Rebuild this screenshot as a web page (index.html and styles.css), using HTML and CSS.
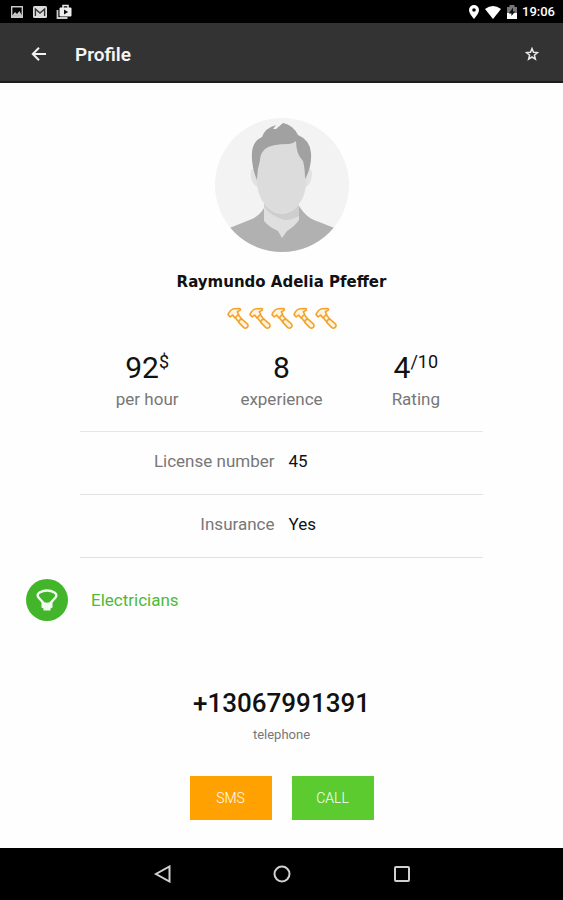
FILE: index.html
```html
<!DOCTYPE html>
<html lang="en">
<head>
<meta charset="utf-8">
<meta name="viewport" content="width=device-width, initial-scale=1">
<title>Profile</title>
<link rel="stylesheet" href="styles.css">
</head>
<body>
<svg class="sprite" aria-hidden="true">
  <symbol id="hammer" viewBox="0 0 22 22">
    <g fill="#fff3df" stroke="#f2a32c" stroke-width="1.6" stroke-linejoin="round">
      <path d="M7.600 10 10.800 7 15 12.600 12 15.200Z"/>
      <path d="M12 15.600Q11.600 12.400 15 12.200L20.600 17.200Q21.600 19 20.200 20.400 18.600 21.800 16.800 20.600Z"/>
      <path d="M1 7.600Q3.200 2.400 7 1.800L12.600 1.600Q14 2.200 13 3.400L10.400 4.800 11.600 7.200 8 11 5.600 8 3.200 10Z"/>
    </g>
  </symbol>
</svg>

<div class="status">
  <div class="status-group notices">
    <svg width="14" height="14" viewBox="0 0 14 14"><path fill="#c8c8c8" fill-rule="evenodd" d="M1 1h12v12H1zM2.4 2.4v7.8h9.2V2.4z"/><path fill="#c8c8c8" d="M2 10.8 5 7l2 2 2.4-3 2.8 4.8z"/></svg>
    <svg width="16" height="14" viewBox="0 0 16 14"><rect x="1" y="1" width="14" height="12" rx="1.5" fill="#ddd"/><path d="M3.4 11V4L8 8l4.6-4v7" fill="none" stroke="#333" stroke-width="1.4"/></svg>
    <svg width="16" height="16" viewBox="0 0 16 16"><path d="M1.5 6v8h10" fill="none" stroke="#ccc" stroke-width="1.8"/><rect x="3.5" y="3.5" width="12" height="9" rx="1" fill="#eee"/><path d="M7 4V1.5h5V4" fill="none" stroke="#eee" stroke-width="1.5"/><path fill="#111" d="m8 5.5 4.2 2.5L8 10.5z"/></svg>
  </div>
  <div class="status-group">
    <svg width="12" height="16" viewBox="0 0 12 16"><path fill="#fff" fill-rule="evenodd" d="M6 1a5 5 0 0 0-5 5c0 3.600 5 9 5 9s5-5.400 5-9a5 5 0 0 0-5-5m0 3.200a1.800 1.800 0 1 1 0 3.600 1.800 1.800 0 0 1 0-3.600"/></svg>
    <svg width="18" height="16" viewBox="0 0 18 16"><path fill="#fff" d="M9 15 1 5Q9-1 17 5z"/></svg>
    <svg width="12" height="16" viewBox="0 0 12 16"><path fill="#777" d="M1 3h2.500V1h5v2H11v12H1z"/><path fill="#fff" d="M1 9h10v6H1z"/><path fill="#111" d="M7 3.600 2.800 9.600H5.400V12L9.200 7.600H7z"/></svg>
    <time>19:06</time>
  </div>
</div>

<header class="toolbar">
  <button class="icon-button" aria-label="Back">
    <svg width="16" height="16" viewBox="0 0 16 16"><path d="M15 8H2M8 1.800 1.800 8 8 14.200" fill="none" stroke="#f2f2f2" stroke-width="2"/></svg>
  </button>
  <h1>Profile</h1>
  <button class="icon-button" aria-label="Add to favourites">
    <svg width="14" height="14" viewBox="0 0 14 14"><path d="M7 1.600 8.500 5.300 12.500 5.600 9.400 8.200 10.400 12.200 7 10 3.600 12.200 4.600 8.200 1.500 5.600 5.500 5.300Z" fill="none" stroke="#e8e8e8" stroke-width="1.500"/></svg>
  </button>
</header>

<main>
  <svg class="avatar" viewBox="0 0 134 134" role="img" aria-label="Profile photo">
    <clipPath id="round"><circle cx="67" cy="67" r="67"/></clipPath>
    <g clip-path="url(#round)">
      <path fill="#f3f3f3" d="M0 0h134v134H0z"/>
      <path fill="#b1b1b1" d="M12 111 37 101Q45 97 49 90L84 88Q91 99 99 102L122 111V134H12Z"/>
      <path fill="#dfdfdf" d="M49 84H84V102Q80 108 72 113L67 120 63 113Q54 109 49 103Z"/>
      <path fill="#cecece" d="M49 86Q57 96 68 96Q77 95 84 87V98Q77 102 70 102Q57 99 49 89Z"/>
      <path fill="#e2e2e2" d="M37 51Q35 52 36 59 38 68 43 69H91Q96 66 97 57 97 51 94 51Z"/>
      <path fill="#dcdcdc" d="M42 36Q44 23 61 22H84Q91 31 92 50 92 74 86 83 78 95 67 95 56 95 48 84 41 74 41 50Z"/>
      <path fill="#a1a1a1" d="M42 62Q36 48 37 34 38 23 47 19 50 10 61 7L58 11 61 11 68 5Q78 7 83 17 95 22 96 35 97 49 90 61 90 50 88 43 81 36 81 23 78 26 74 26 56 26 50 31 45 36 45 42 42 52 42 62Z"/>
    </g>
  </svg>
  <h2>Raymundo Adelia Pfeffer</h2>
  <div class="hammers" role="img" aria-label="Five hammers">
    <svg><use href="#hammer"/></svg><svg><use href="#hammer"/></svg><svg><use href="#hammer"/></svg><svg><use href="#hammer"/></svg><svg><use href="#hammer"/></svg>
  </div>

  <div class="facts">
    <div class="stats">
      <div class="stat"><p class="number">92<sup>$</sup></p><p class="label">per hour</p></div>
      <div class="stat"><p class="number">8</p><p class="label">experience</p></div>
      <div class="stat"><p class="number">4<sup>/10</sup></p><p class="label">Rating</p></div>
    </div>
    <dl>
      <div class="row"><dt>License number</dt><dd>45</dd></div>
      <div class="row"><dt>Insurance</dt><dd>Yes</dd></div>
    </dl>
  </div>

  <div class="trade">
    <svg width="42" height="42" viewBox="0 0 42 42"><circle cx="21" cy="21" r="21" fill="#43b52b"/><path d="M17.500 24 12.500 18.500Q10.500 15.500 13.500 13.500 17 11.500 21 11.500 25 11.500 28.500 13.500 31.500 15.500 29.500 18.500L24.500 24Q21 26 17.500 24Z" fill="none" stroke="#f0faee" stroke-width="2.400"/><path fill="#f0faee" d="M15.500 22Q21 27 26.500 22V28.500L24.500 29.500V31.500H17.500V29.500L15.500 28.500Z"/></svg>
    <span>Electricians</span>
  </div>

  <p class="phone">+13067991391</p>
  <p class="phone-label">telephone</p>
  <div class="actions">
    <button class="sms">SMS</button>
    <button class="call">CALL</button>
  </div>
</main>

<nav aria-label="System">
  <button aria-label="Back"><svg width="18" height="18" viewBox="0 0 18 18"><path d="M16.500 1.500V16.500L3 9Z"/></svg></button>
  <button aria-label="Home"><svg width="18" height="18" viewBox="0 0 18 18"><circle cx="9" cy="9" r="7.500"/></svg></button>
  <button aria-label="Recent apps"><svg width="18" height="18" viewBox="0 0 18 18"><rect x="2" y="2" width="14" height="14" rx="1"/></svg></button>
</nav>
</body>
</html>
```
FILE: styles.css
```css
* { box-sizing: border-box; }

body {
  margin: 0;
  min-height: 100vh;
  display: flex;
  flex-direction: column;
  background: #fefefe;
  color: #111;
  font-family: Roboto, "Liberation Sans", sans-serif;
}

h1, h2, p, dl, dd { margin: 0; }
svg { display: block; }
.sprite { position: absolute; width: 0; height: 0; }

button {
  border: 0;
  padding: 0;
  background: none;
  font: inherit;
}

.status {
  height: 23px;
  padding: 0 8px 0 10px;
  display: flex;
  align-items: center;
  justify-content: space-between;
  background: #000;
  color: #fff;
  font-size: 13px;
  font-weight: 500;
}

.status-group { display: flex; align-items: center; gap: 4px; }
.notices { gap: 8px; }

.toolbar {
  height: 60px;
  padding: 4px 19px 0 27px;
  display: flex;
  align-items: center;
  background: #333;
  border-bottom: 2px solid #1c1c1c;
  color: #f5f5f5;
}

.toolbar h1 { flex: 1; margin-left: 24px; font-size: 19px; font-weight: 600; }
.icon-button { width: 24px; height: 40px; display: grid; place-items: center; }

main {
  flex: 1;
  padding: 35px 0 28px;
  display: flex;
  flex-direction: column;
  align-items: center;
}

.avatar { width: 134px; height: 134px; }

h2 {
  margin-top: 20px;
  font-family: "DejaVu Sans", sans-serif;
  font-size: 15px;
  line-height: 20px;
  font-weight: 700;
}

.hammers { display: flex; margin-top: 15px; }
.hammers svg { width: 22px; height: 22px; }

.facts { align-self: stretch; margin: 20px 80px 0; }

.stats {
  display: grid;
  grid-template-columns: repeat(3, 1fr);
  padding-bottom: 20px;
  border-bottom: 1px solid #e6e6e6;
  text-align: center;
}

.number { font-size: 30px; line-height: 38px; }
.number sup { font-size: 18px; line-height: 0; vertical-align: 10px; }
.label { font-size: 17px; line-height: 24px; color: #777; }

.row {
  display: grid;
  grid-template-columns: 1fr 1fr;
  gap: 14px;
  padding: 18px 0 22px;
  border-bottom: 1px solid #e2e2e2;
  font-size: 17px;
  line-height: 22px;
}

.row dt { text-align: right; color: #777; }

.trade {
  align-self: stretch;
  display: flex;
  align-items: center;
  gap: 23px;
  margin: 21px 26px 0;
  color: #4dba38;
  font-size: 17px;
}

.phone { margin-top: 66px; font-size: 26px; line-height: 32px; font-weight: 500; }
.phone-label { margin-top: 6px; font-size: 13px; line-height: 20px; color: #777; }

.actions { display: flex; gap: 20px; margin-top: 31px; }
.actions button { width: 82px; height: 44px; color: #fff; font-size: 14px; font-weight: 300; }
.actions .sms { background: #ffa100; }
.actions .call { background: #5ccb2f; }

nav {
  height: 52px;
  display: flex;
  justify-content: center;
  align-items: center;
  gap: 72px;
  background: #000;
}

nav button { width: 48px; height: 48px; display: grid; place-items: center; }
nav svg { fill: none; stroke: #d0d0d0; stroke-width: 2; }
```
